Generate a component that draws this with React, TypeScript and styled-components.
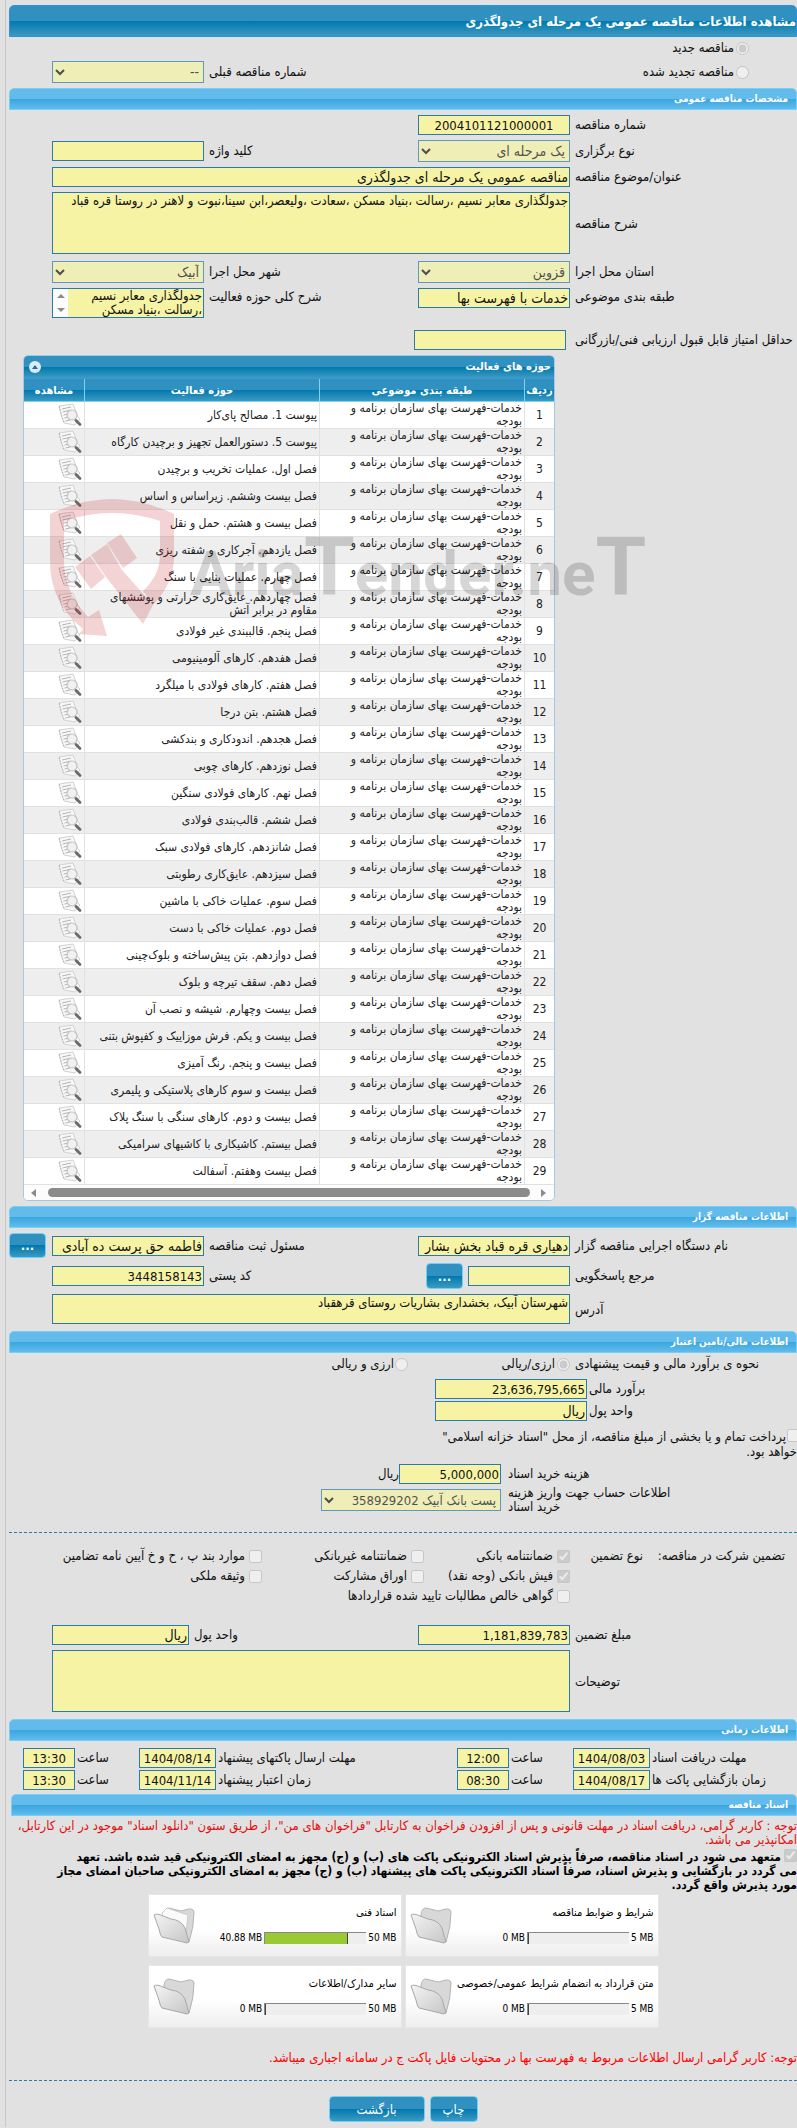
import React from "react";
import styled, { createGlobalStyle } from "styled-components";

const ink = "#111";
const line = "#2a7ba9";
const fieldBg = "#f6f4a4";
const darkBar = "linear-gradient(#3090c0 0, #3090c0 50%, #0078ae 50%, #3d9ac2 100%)";
const lightBar = "linear-gradient(#63bbeb 0, #63bbeb 50%, #38a6e1 50%, #62bbeb 100%)";
const fontStack = '"DejaVu Sans Condensed", "DejaVu Sans", sans-serif';

const GlobalStyle = createGlobalStyle`
  * { box-sizing: border-box; }
  body { margin: 0; background: #e1e1e1; color: ${ink}; font: 13px/14px ${fontStack}; }
  input, select, textarea, button { font-family: ${fontStack}; margin: 0; }
`;

const Page = styled.div`
  direction: rtl;
  position: relative;
  margin-left: 5px;
  border-left: 1px solid #c8c8c8;
  padding: 5px 0 5px 3px;
  overflow: hidden;
`;

const TitleBar = styled.h1`
  margin: 0;
  height: 32px;
  border: 1px solid #2b93d8;
  border-radius: 5px 5px 0 0;
  background: ${darkBar};
  color: #fff;
  font-size: 13px;
  line-height: 32px;
`;

const SectionBar = styled.h2<{ $inset?: boolean }>`
  margin: 0 0 0 ${(p) => (p.$inset ? 2 : 0)}px;
  height: 22px;
  padding: 0 8px;
  border: 1px solid #74d0f6;
  border-radius: 5px 5px 0 0;
  background: ${lightBar};
  color: #fff;
  font-size: 10px;
  line-height: 20px;
`;

const Stack = styled.div<{ $gap?: number; $top?: number; $bottom?: number }>`
  display: grid;
  gap: ${(p) => p.$gap ?? 5}px;
  padding: ${(p) => p.$top ?? 5}px 0 ${(p) => p.$bottom ?? 5}px;
`;

const FormGrid = styled.div<{ $unit?: boolean }>`
  display: grid;
  grid-template-columns: 222px 152px 1fr ${(p) => (p.$unit ? 137 : 152)}px;
  column-gap: 5px;
  align-items: center;
  padding-left: 43px;
`;

const TopGrid = styled(FormGrid)`
  align-items: start;
`;

const Label = styled.label`
  text-align: left;
  white-space: nowrap;
`;

const TopLabel = styled(Label)`
  padding-top: 2px;
`;

const Field = styled.input<{ $center?: boolean; $text?: boolean }>`
  width: 100%;
  min-width: 0;
  height: 20px;
  padding: 0 1px;
  border: 1px solid ${line};
  border-radius: 0;
  background: ${fieldBg};
  color: ${ink};
  font-size: ${(p) => (p.$text ? 14 : 13)}px;
  text-align: ${(p) => (p.$center ? "center" : "right")};
`;

const WideField = styled(Field)`
  grid-column: span 3;
`;

const Choice = styled.select<{ $small?: boolean }>`
  width: 100%;
  height: 22px;
  border: 1px solid ${line};
  border-radius: 0;
  background: ${fieldBg};
  color: ${ink};
  font-size: ${(p) => (p.$small ? 13 : 14)}px;
  &:disabled { opacity: 0.7; color: ${ink}; }
`;

const Area = styled.textarea<{ $h: number }>`
  display: block;
  width: 100%;
  height: ${(p) => p.$h}px;
  padding: 0 1px;
  border: 1px solid ${line};
  border-radius: 0;
  background: ${fieldBg};
  color: ${ink};
  font-size: 13px;
  line-height: 15px;
  resize: none;
  overflow: hidden;
`;

const WideArea = styled(Area)`
  grid-column: span 3;
  margin-bottom: 2px;
`;

const ScrollBox = styled.div`
  display: flex;
  border: 1px solid ${line};
  height: 30px;
  & > textarea { border: 0; height: 28px; flex: 1; min-width: 0; line-height: 14px; }
`;

const Spinner = styled.div`
  width: 15px;
  background: #fcfcfc;
  display: flex;
  flex-direction: column;
  align-items: center;
  justify-content: space-between;
  padding: 3px 0;
`;

const Tick = styled.input`
  width: 13px;
  height: 13px;
  flex: none;
`;

const Option = styled.label<{ $gap?: number }>`
  display: flex;
  align-items: center;
  gap: ${(p) => p.$gap ?? 2}px;
  white-space: nowrap;
`;

const KindRow = styled.div`
  display: flex;
  justify-content: space-between;
  align-items: center;
  height: 22px;
  padding: 0 48px 0 43px;
`;

const PriorNumber = styled.div`
  display: grid;
  grid-template-columns: auto 152px;
  align-items: center;
  gap: 5px;
`;

const ScoreRow = styled.div`
  display: grid;
  grid-template-columns: 222px 152px;
  column-gap: 9px;
  align-items: center;
`;

const Panel = styled.section`
  margin: 0 242px 5px 14px;
  border: 1px solid #a3c8e2;
  border-radius: 5px;
  overflow: hidden;
  background: #fff;
`;

const PanelTitle = styled.div`
  display: flex;
  align-items: center;
  justify-content: space-between;
  height: 23px;
  padding: 0 3px 0 5px;
  border-bottom: 1px solid #3d9ad8;
  background: ${darkBar};
  color: #fff;
  font-size: 11px;
  font-weight: bold;
`;

const CollapseButton = styled.button`
  display: flex;
  align-items: center;
  justify-content: center;
  width: 12px;
  height: 12px;
  padding: 0;
  border: 0;
  border-radius: 50%;
  background: #dcebf7;
`;

const Table = styled.table`
  width: 100%;
  table-layout: fixed;
  border-collapse: separate;
  border-spacing: 0;
  font-size: 12px;
  line-height: 13px;
  color: #222;
`;

const HeadCell = styled.th`
  height: 23px;
  padding: 0;
  border-bottom: 1px solid #7cd3f5;
  background: ${darkBar};
  color: #fff;
  font-size: 11px;
  &:not(:last-child) { border-left: 1px solid #7cd3f5; }
`;

const Cell = styled.td<{ $center?: boolean; $narrow?: boolean }>`
  height: 27px;
  padding: 0 2px 0 ${(p) => (p.$narrow ? 16 : 2)}px;
  border-bottom: 1px solid #e1e1e1;
  text-align: ${(p) => (p.$center ? "center" : "right")};
  &:not(:last-child) { border-left: 1px solid #e1e1e1; }
  tr:nth-child(even) > & { background: #eee; }
`;

const ViewButton = styled.button`
  display: block;
  width: 24px;
  height: 24px;
  padding: 0;
  border: 0;
  background: none;
`;

const ScrollTrack = styled.div`
  display: flex;
  align-items: center;
  gap: 10px;
  height: 15px;
  padding: 0 6px;
  background: #fcfcfc;
`;

const ScrollThumb = styled.div`
  flex: 1;
  height: 9px;
  border-radius: 5px;
  background: #8b8b8b;
`;

const Button = styled.button<{ $w: number }>`
  width: ${(p) => p.$w}px;
  height: 26px;
  padding: 0;
  border: 1px solid #6fd0f7;
  border-radius: 4px;
  background: ${darkBar};
  color: #fff;
  font-size: 13px;
`;

const DotsButton = styled(Button)`
  font-weight: bold;
`;

const OwnerGrid = styled(FormGrid)`
  grid-template-columns: 222px 152px 1fr 152px 38px;
  padding-left: 0;
  & > button { justify-self: end; height: 25px; }
`;

const Contact = styled.div`
  display: flex;
  gap: 5px;
  align-items: center;
  width: 144px;
  & > input { flex: 1; }
`;

const MethodRow = styled.div`
  display: grid;
  grid-template-columns: 222px 157px auto;
  column-gap: 5px;
  justify-content: start;
  align-items: center;
  height: 22px;
`;

const MoneyGrid = styled.div`
  display: grid;
  grid-template-columns: 208px 152px;
  gap: 2px;
  align-items: center;
  padding: 4px 0 8px;
`;

const TreasuryNote = styled.label`
  display: block;
  max-width: 368px;
  margin-bottom: 5px;
  line-height: 15px;
  & > input { margin: 0 -3px 0 1px; vertical-align: -1px; }
`;

const CostGrid = styled.div`
  display: grid;
  grid-template-columns: 289px 180px;
  gap: 2px 7px;
  align-items: center;
  & > label { white-space: normal; padding-right: 115px; }
`;

const Cost = styled.div`
  display: grid;
  grid-template-columns: 102px auto;
  align-items: center;
`;

const Dashes = styled.hr<{ $top: number }>`
  margin: ${(p) => p.$top}px 0 0;
  border: 0;
  border-top: 1px dashed ${line};
`;

const Guarantee = styled.div`
  display: grid;
  grid-template-columns: 142px 73px 1fr;
  padding: 13px 12px 0 0;
  line-height: 20px;
  white-space: nowrap;
`;

const GuaranteeOptions = styled.div`
  display: grid;
  grid-template-columns: 146px 162px auto;
  grid-auto-rows: 20px;
  justify-content: start;
  & > :last-child { grid-column: span 2; }
`;

const DateGrid = styled.div`
  display: grid;
  grid-template-columns: 145px 77px 60px 52px 1fr 77px 60px 52px;
  gap: 2px;
  align-items: center;
  padding: 7px 0 4px 14px;
`;

const Notice = styled.p<{ $tone?: string }>`
  margin: 0;
  padding-top: 3px;
  color: ${(p) => p.$tone ?? "#f00"};
`;

const Pledge = styled.label`
  display: block;
  padding: 2px 0;
  color: #000;
  font-size: 12px;
  font-weight: bold;
  & > input { margin-left: 3px; vertical-align: -1px; }
`;

const Cards = styled.div`
  display: grid;
  grid-template-columns: 254px 254px;
  justify-content: center;
  gap: 8px 3px;
  margin-bottom: 20px;
`;

const Card = styled.article`
  display: grid;
  grid-template-columns: 1fr 42px;
  align-items: center;
  height: 63px;
  padding: 0 4px;
  border: 1px solid #e6e6e6;
  background: linear-gradient(#fff 55%, #eee);
  font-size: 11px;
  color: #000;
`;

const CardTitle = styled.div`
  white-space: nowrap;
  padding-bottom: 11px;
`;

const Meter = styled.div`
  display: flex;
  align-items: center;
  gap: 2px;
  direction: ltr;
  justify-content: flex-end;
  font-size: 10px;
`;

const Bar = styled.div`
  width: 102px;
  height: 12px;
  border-top: 1px solid #888;
  border-left: 1px solid #888;
  background: #eee;
`;

const Fill = styled.div`
  height: 100%;
  border-right: 1px solid #444;
  background: #99ca33;
`;

const Actions = styled.div`
  display: flex;
  justify-content: center;
  gap: 5px;
  padding-top: 15px;
`;

const Watermark = styled.div`
  position: absolute;
  top: 499px;
  left: 44px;
  display: flex;
  direction: ltr;
  pointer-events: none;
`;

const WatermarkText = styled.div`
  margin: 22px 0 0 14px;
  height: 92px;
  white-space: nowrap;
  color: rgba(0, 0, 0, 0.16);
  font: bold 62px/92px Roboto, sans-serif;
`;

const TallLetter = styled.span`
  font-size: 82px;
`;

const PageIcon = () => (
  <svg width="24" height="24" viewBox="0 0 24 24" aria-hidden="true">
    <path d="M1 3 L15 1 L20 14 L22 16 L17 22 L6 20 Q3 13 1 3Z" fill="#f8f8f8" stroke="#d2d2d2" />
    <path d="M4 6 L13 4 M4.500 9 L13 7 M5.500 12 L11 11 M6.500 15 L10 14.300 M7.500 18 L12 17" stroke="#b4b4b4" fill="none" />
    <path d="M1.500 3.500 Q3 13 6.500 20" stroke="#999" strokeDasharray="1 2" fill="none" />
    <circle cx="14" cy="12" r="5" fill="#f0f0f0" fillOpacity="0.85" stroke="#c4c4c4" strokeWidth="1.200" />
    <path d="M18 17.500 L22 21.500" stroke="#6a6a6a" strokeWidth="2.800" strokeLinecap="round" />
  </svg>
);

const FolderIcon = ({ full }: { full?: boolean }) => (
  <svg width="42" height="37" viewBox="0 0 42 37" aria-hidden="true">
    <defs>
      <linearGradient id="folderFront" x1="0" y1="0" x2="1" y2="1">
        <stop offset="0" stopColor="#f4f4f4" />
        <stop offset="1" stopColor="#c6c6c6" />
      </linearGradient>
    </defs>
    <path d="M11 7 Q12 1 16 1 L24 3 Q28 5 32 3 Q40 0 41 5 Q41 20 36 35 L12 20Z" fill="#d8d8d8" stroke="#b4b4b4" />
    {full && <path d="M9 6 L14 1 L35 8 L33 26 L10 20Z" fill="#fafafa" stroke="#ccc" />}
    <path d="M1 8 Q4 6 10 9 L18 12 Q28 13 32 21 L36 35 Q34 37 30 35 L9 30 Q7 28 6 22Z" fill="url(#folderFront)" stroke="#a8a8a8" />
  </svg>
);

const Arrow = ({ d }: { d: string }) => (
  <svg width="8" height="8" viewBox="0 0 8 8" aria-hidden="true">
    <path d={d} fill="#8b8b8b" />
  </svg>
);

const Shield = () => (
  <svg width="126" height="140" viewBox="0 0 126 140" aria-hidden="true">
    <g fill="#c8242f" fillOpacity="0.2">
      <path d="M0 15 Q62 -15 124 15 V58 Q124 84 103 106 L93 92 Q110 76 110 56 V22 Q62 6 14 22 V62 Q14 92 38 118 L49 111 L57 137 L29 135 L33 130 Q0 104 0 62Z" />
      <path d="M25 68 L40 57 L55 78 L41 90Z" />
      <path d="M41 56 L57 45 L72 71 L103 106 L93 125 L56 78Z" />
      <path d="M57 44 L71 35 L87 59 L73 69Z" />
    </g>
  </svg>
);

const topics = [
  "پیوست 1. مصالح پای‌کار",
  "پیوست 5. دستورالعمل تجهیز و برچیدن کارگاه",
  "فصل اول. عملیات تخریب و برچیدن",
  "فصل بیست وششم. زیراساس و اساس",
  "فصل بیست و هشتم. حمل و نقل",
  "فصل یازدهم. آجرکاری و شفته ریزی",
  "فصل چهارم. عملیات بنایی با سنگ",
  "فصل چهاردهم. عایق‌کاری حرارتی و پوششهای مقاوم در برابر آتش",
  "فصل پنجم. قالببندی غیر فولادی",
  "فصل هفدهم. کارهای آلومینیومی",
  "فصل هفتم. کارهای فولادی با میلگرد",
  "فصل هشتم. بتن درجا",
  "فصل هجدهم. اندودکاری و بندکشی",
  "فصل نوزدهم. کارهای چوبی",
  "فصل نهم. کارهای فولادی سنگین",
  "فصل ششم. قالب‌بندی فولادی",
  "فصل شانزدهم. کارهای فولادی سبک",
  "فصل سیزدهم. عایق‌کاری رطوبتی",
  "فصل سوم. عملیات خاکی با ماشین",
  "فصل دوم. عملیات خاکی با دست",
  "فصل دوازدهم. بتن پیش‌ساخته و بلوک‌چینی",
  "فصل دهم. سقف تیرچه و بلوک",
  "فصل بیست وچهارم. شیشه و نصب آن",
  "فصل بیست و یکم. فرش موزاییک و کفپوش بتنی",
  "فصل بیست و پنجم. رنگ آمیزی",
  "فصل بیست و سوم کارهای پلاستیکی و پلیمری",
  "فصل بیست و دوم. کارهای سنگی با سنگ پلاک",
  "فصل بیستم. کاشیکاری با کاشیهای سرامیکی",
  "فصل بیست وهفتم. آسفالت",
];

const guarantees: [string, boolean][] = [
  ["ضمانتنامه بانکی", true],
  ["ضمانتنامه غیربانکی", false],
  ["موارد بند پ ، ح و خ آیین نامه تضامین", false],
  ["فیش بانکی (وجه نقد)", true],
  ["اوراق مشارکت", false],
  ["وثیقه ملکی", false],
  ["گواهی خالص مطالبات تایید شده قراردادها", false],
];

const dates = [
  ["receive", "مهلت دریافت اسناد", "1404/08/03", "12:00"],
  ["send", "مهلت ارسال پاکتهای پیشنهاد", "1404/08/14", "13:30"],
  ["open", "زمان بازگشایی پاکت ها", "1404/08/17", "08:30"],
  ["valid", "زمان اعتبار پیشنهاد", "1404/11/14", "13:30"],
];

const files = [
  { title: "شرایط و ضوابط مناقصه", used: 0, max: 5 },
  { title: "اسناد فنی", used: 40.88, max: 50 },
  { title: "متن قرارداد به انضمام شرایط عمومی/خصوصی", used: 0, max: 5 },
  { title: "سایر مدارک/اطلاعات", used: 0, max: 50 },
];

export default function App() {
  return (
    <Page>
      <GlobalStyle />
      <TitleBar>مشاهده اطلاعات مناقصه عمومی یک مرحله ای جدولگذری</TitleBar>
      <Stack $top={0} $gap={2}>
        <KindRow>
          <Option><Tick type="radio" name="kind" defaultChecked disabled />مناقصه جدید</Option>
        </KindRow>
        <KindRow>
          <Option><Tick type="radio" name="kind" disabled />مناقصه تجدید شده</Option>
          <PriorNumber>
            <Label htmlFor="prior">شماره مناقصه قبلی</Label>
            <Choice id="prior" disabled><option>--</option></Choice>
          </PriorNumber>
        </KindRow>
      </Stack>

      <SectionBar>مشخصات مناقصه عمومی</SectionBar>
      <Stack $bottom={12}>
        <FormGrid>
          <Label htmlFor="number">شماره مناقصه</Label>
          <Field id="number" $center readOnly value="2004101121000001" />
        </FormGrid>
        <FormGrid>
          <Label htmlFor="type">نوع برگزاری</Label>
          <Choice id="type" disabled><option>یک مرحله ای</option></Choice>
          <Label htmlFor="keyword">کلید واژه</Label>
          <Field id="keyword" readOnly />
        </FormGrid>
        <FormGrid>
          <Label htmlFor="subject">عنوان/موضوع مناقصه</Label>
          <WideField id="subject" $text readOnly value="مناقصه عمومی یک مرحله ای جدولگذری" />
        </FormGrid>
        <FormGrid>
          <Label htmlFor="description">شرح مناقصه</Label>
          <WideArea id="description" $h={62} readOnly value="جدولگذاری معابر نسیم ،رسالت ،بنیاد مسکن ،سعادت ،ولیعصر،ابن سینا،نبوت و لاهنر در روستا قره قباد" />
        </FormGrid>
        <FormGrid>
          <Label htmlFor="province">استان محل اجرا</Label>
          <Choice id="province" disabled><option>قزوین</option></Choice>
          <Label htmlFor="city">شهر محل اجرا</Label>
          <Choice id="city" disabled><option>آبیک</option></Choice>
        </FormGrid>
        <TopGrid>
          <TopLabel htmlFor="category">طبقه بندی موضوعی</TopLabel>
          <Field id="category" $text readOnly value="خدمات با فهرست بها" />
          <TopLabel htmlFor="scope">شرح کلی حوزه فعالیت</TopLabel>
          <ScrollBox>
            <Area id="scope" $h={28} readOnly value="جدولگذاری معابر نسیم ،رسالت ،بنیاد مسکن" />
            <Spinner>
              <Arrow d="M0 6 L4 2 L8 6Z" />
              <Arrow d="M0 2 L4 6 L8 2Z" />
            </Spinner>
          </ScrollBox>
        </TopGrid>
      </Stack>
      <Stack $top={0}>
        <ScoreRow>
          <Label htmlFor="score">حداقل امتیاز قابل قبول ارزیابی فنی/بازرگانی</Label>
          <Field id="score" readOnly />
        </ScoreRow>
      </Stack>

      <Panel>
        <PanelTitle>
          حوزه های فعالیت
          <CollapseButton type="button" aria-label="بستن">
            <svg width="6" height="4" viewBox="0 0 6 4" aria-hidden="true"><path d="M0 4 L3 0 L6 4Z" fill="#1a6fa5" /></svg>
          </CollapseButton>
        </PanelTitle>
        <Table>
          <colgroup>
            <col width="30" />
            <col width="205" />
            <col />
            <col width="60" />
          </colgroup>
          <thead>
            <tr>
              <HeadCell>ردیف</HeadCell>
              <HeadCell>طبقه بندی موضوعی</HeadCell>
              <HeadCell>حوزه فعالیت</HeadCell>
              <HeadCell>مشاهده</HeadCell>
            </tr>
          </thead>
          <tbody>
            {topics.map((topic, i) => (
              <tr key={topic}>
                <Cell $center>{i + 1}</Cell>
                <Cell $narrow>خدمات-فهرست بهای سازمان برنامه و بودجه</Cell>
                <Cell>{topic}</Cell>
                <Cell><ViewButton type="button" aria-label="مشاهده"><PageIcon /></ViewButton></Cell>
              </tr>
            ))}
          </tbody>
        </Table>
        <ScrollTrack>
          <Arrow d="M1 0 L6 4 L1 8Z" />
          <ScrollThumb />
          <Arrow d="M6 0 L1 4 L6 8Z" />
        </ScrollTrack>
      </Panel>

      <SectionBar>اطلاعات مناقصه گزار</SectionBar>
      <Stack>
        <OwnerGrid>
          <Label htmlFor="agency">نام دستگاه اجرایی مناقصه گزار</Label>
          <Field id="agency" $text readOnly value="دهیاری قره قباد بخش بشار" />
          <Label htmlFor="registrar">مسئول ثبت مناقصه</Label>
          <Field id="registrar" $text readOnly value="فاطمه حق پرست ده آبادی" />
          <DotsButton type="button" $w={37}>...</DotsButton>
        </OwnerGrid>
        <FormGrid>
          <Label htmlFor="contact">مرجع پاسخگویی</Label>
          <Contact>
            <Field id="contact" readOnly />
            <DotsButton type="button" $w={37}>...</DotsButton>
          </Contact>
          <Label htmlFor="postal">کد پستی</Label>
          <Field id="postal" readOnly value="3448158143" />
        </FormGrid>
        <FormGrid>
          <Label htmlFor="address">آدرس</Label>
          <WideArea id="address" $h={30} readOnly value="شهرستان آبیک، بخشداری بشاریات روستای قرهقباد" />
        </FormGrid>
      </Stack>

      <SectionBar>اطلاعات مالی/تامین اعتبار</SectionBar>
      <MethodRow>
        <Label as="span">نحوه ی برآورد مالی و قیمت پیشنهادی</Label>
        <Option><Tick type="radio" name="currency" defaultChecked disabled />ارزی/ریالی</Option>
        <Option $gap={1}><Tick type="radio" name="currency" disabled />ارزی و ریالی</Option>
      </MethodRow>
      <MoneyGrid>
        <Label htmlFor="estimate">برآورد مالی</Label>
        <Field id="estimate" readOnly value="23,636,795,665" />
        <Label htmlFor="unit1">واحد پول</Label>
        <Field id="unit1" $text readOnly value="ریال" />
      </MoneyGrid>
      <TreasuryNote>
        <Tick type="checkbox" disabled />
        پرداخت تمام و یا بخشی از مبلغ مناقصه، از محل "اسناد خزانه اسلامی" خواهد بود.
      </TreasuryNote>
      <CostGrid>
        <Label htmlFor="cost">هزینه خرید اسناد</Label>
        <Cost><Field id="cost" readOnly value="5,000,000" />ریال</Cost>
        <Label htmlFor="account">اطلاعات حساب جهت واریز هزینه خرید اسناد</Label>
        <Choice id="account" $small disabled><option>پست بانک آبیک 358929202</option></Choice>
      </CostGrid>

      <Dashes $top={18} />
      <Guarantee>
        <span>تضمین شرکت در مناقصه:</span>
        <span>نوع تضمین</span>
        <GuaranteeOptions>
          {guarantees.map(([name, on]) => (
            <Option key={name} $gap={4}><Tick type="checkbox" defaultChecked={on} disabled />{name}</Option>
          ))}
        </GuaranteeOptions>
      </Guarantee>
      <Stack $top={19}>
        <FormGrid $unit>
          <Label htmlFor="amount">مبلغ تضمین</Label>
          <Field id="amount" readOnly value="1,181,839,783" />
          <Label htmlFor="unit2">واحد پول</Label>
          <Field id="unit2" $text readOnly value="ریال" />
        </FormGrid>
        <FormGrid>
          <Label htmlFor="notes">توضیحات</Label>
          <WideArea id="notes" $h={62} readOnly />
        </FormGrid>
      </Stack>

      <SectionBar>اطلاعات زمانی</SectionBar>
      <DateGrid>
        {dates.map(([id, name, day, hour]) => (
          <React.Fragment key={id}>
            <Label htmlFor={id}>{name}</Label>
            <Field id={id} $center readOnly value={day} />
            <Label htmlFor={id + "-time"}>ساعت</Label>
            <Field id={id + "-time"} $center readOnly value={hour} />
          </React.Fragment>
        ))}
      </DateGrid>

      <SectionBar $inset>اسناد مناقصه</SectionBar>
      <Notice $tone="#e01010">
        توجه : کاربر گرامی، دریافت اسناد در مهلت قانونی و پس از افزودن فراخوان به کارتابل "فراخوان های من"، از طریق ستون "دانلود اسناد" موجود در این کارتابل، امکانپذیر می باشد.
      </Notice>
      <Pledge>
        <Tick type="checkbox" defaultChecked disabled />
        متعهد می شود در اسناد مناقصه، صرفاً پذیرش اسناد الکترونیکی پاکت های (ب) و (ج) مجهز به امضای الکترونیکی قید شده باشد. تعهد
        <br />
        می گردد در بازگشایی و پذیرش اسناد، صرفاً اسناد الکترونیکی پاکت های پیشنهاد (ب) و (ج) مجهز به امضای الکترونیکی صاحبان امضای مجاز
        <br />
        مورد پذیرش واقع گردد.
      </Pledge>
      <Cards>
        {files.map((f) => (
          <Card key={f.title}>
            <div>
              <CardTitle>{f.title}</CardTitle>
              <Meter>
                <span>{f.used} MB</span>
                <Bar role="progressbar" aria-label={f.title} aria-valuenow={f.used} aria-valuemax={f.max}>
                  <Fill style={{ width: `${(f.used / f.max) * 100}%` }} />
                </Bar>
                <span>{f.max} MB</span>
              </Meter>
            </div>
            <FolderIcon full={f.used > 0} />
          </Card>
        ))}
      </Cards>
      <Notice>توجه: کاربر گرامی ارسال اطلاعات مربوط به فهرست بها در محتویات فایل پاکت ج در سامانه اجباری میباشد.</Notice>
      <Dashes $top={15} />
      <Actions>
        <Button type="button" $w={48}>چاپ</Button>
        <Button type="button" $w={96}>بازگشت</Button>
      </Actions>

      <Watermark aria-hidden="true">
        <Shield />
        <WatermarkText>Aria<TallLetter>T</TallLetter>ender.ne<TallLetter>T</TallLetter></WatermarkText>
      </Watermark>
    </Page>
  );
}
